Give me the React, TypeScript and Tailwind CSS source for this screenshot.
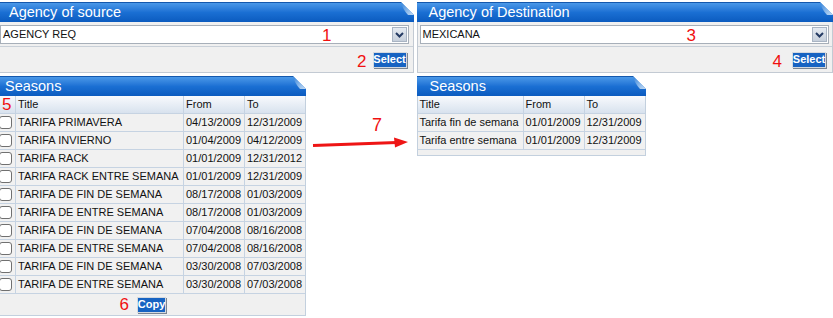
import React from "react";

type Row = { title: string; from: string; to: string };

const SOURCE_ROWS: Row[] = [
  { title: "TARIFA PRIMAVERA", from: "04/13/2009", to: "12/31/2009" },
  { title: "TARIFA INVIERNO", from: "01/04/2009", to: "04/12/2009" },
  { title: "TARIFA RACK", from: "01/01/2009", to: "12/31/2012" },
  { title: "TARIFA RACK ENTRE SEMANA", from: "01/01/2009", to: "12/31/2009" },
  { title: "TARIFA DE FIN DE SEMANA", from: "08/17/2008", to: "01/03/2009" },
  { title: "TARIFA DE ENTRE SEMANA", from: "08/17/2008", to: "01/03/2009" },
  { title: "TARIFA DE FIN DE SEMANA", from: "07/04/2008", to: "08/16/2008" },
  { title: "TARIFA DE ENTRE SEMANA", from: "07/04/2008", to: "08/16/2008" },
  { title: "TARIFA DE FIN DE SEMANA", from: "03/30/2008", to: "07/03/2008" },
  { title: "TARIFA DE ENTRE SEMANA", from: "03/30/2008", to: "07/03/2008" },
];

const DEST_ROWS: Row[] = [
  { title: "Tarifa fin de semana", from: "01/01/2009", to: "12/31/2009" },
  { title: "Tarifa entre semana", from: "01/01/2009", to: "12/31/2009" },
];

// blue title bar with the folded corner on the right
function PanelHeader({ title, pad = "pl-[12px]" }: { title: string; pad?: string }) {
  return (
    <div
      className={`relative h-[20px] flex items-center ${pad} text-white text-[14.5px] border-t border-[#1458ad] bg-linear-to-b from-[#4a98e8] via-[#1a6fd3] to-[#0b5bbf]`}
    >
      {title}
      <svg
        className="absolute top-[-1px] right-0"
        width="13"
        height="13"
        viewBox="0 0 13 13"
      >
        <defs>
          <linearGradient id="fold" x1="0" y1="0" x2="1" y2="1">
            <stop offset="0" stopColor="#2f7fd8" />
            <stop offset="0.6" stopColor="#8fbbea" />
            <stop offset="1" stopColor="#c4dcf5" />
          </linearGradient>
        </defs>
        <polygon points="0,0 13,0 13,13" fill="#ffffff" />
        <path d="M0 0 L13 13 L7 13 Q2 8 0 0 Z" fill="url(#fold)" />
      </svg>
    </div>
  );
}

function Num({ n, className = "" }: { n: string; className?: string }) {
  return (
    <span className={`text-[#f01010] text-[17px] leading-none ${className}`}>
      {n}
    </span>
  );
}

function BlueButton({ label, width }: { label: string; width: string }) {
  return (
    <button
      className={`${width} h-[16px] bg-[#1763c2] text-white font-bold text-[11px] leading-none border border-[#d4d9df] shadow-[1px_1px_0_#7b8592] flex items-center justify-center`}
    >
      {label}
    </button>
  );
}

function AgencyPanel({
  title,
  value,
  selNum,
  selNumLeft,
  btnNum,
  btnGap,
  inset,
}: {
  title: string;
  value: string;
  selNum: string;
  selNumLeft: string;
  btnNum: string;
  btnGap: string;
  inset: string;
}) {
  return (
    <div>
      <PanelHeader title={title} />
      <div className="border border-t-0 border-[#c3cad3] bg-[#f0f0f0]">
        <div className={`${inset} pt-[3px] pb-[2px]`}>
          <div className="relative h-[19px] border border-[#a7afb9] bg-white flex items-center justify-between">
            <span className="pl-[2px] text-[11px] text-[#111]">{value}</span>
            <Num n={selNum} className={`absolute top-[1px] ${selNumLeft}`} />
            <div className="h-[15px] w-[15px] mr-[1px] border border-[#a9b4c3] bg-linear-to-b from-[#e6ebf2] to-[#c6cfdb] flex items-center justify-center">
              <svg width="9" height="6" viewBox="0 0 9 6">
                <path
                  d="M1 1 L4.5 4.5 L8 1"
                  fill="none"
                  stroke="#243a63"
                  strokeWidth="2"
                />
              </svg>
            </div>
          </div>
        </div>
        <div
          className={`border-t border-[#c9d0d8] h-[26px] flex items-center justify-end pr-[6px] ${btnGap}`}
        >
          <Num n={btnNum} className="mt-[3px]" />
          <BlueButton label="Select" width="w-[34px]" />
        </div>
      </div>
    </div>
  );
}

const CELL = "border-r border-b border-[#c6d3e2] flex items-center pl-[2px] whitespace-nowrap";

function SeasonsTable({
  rows,
  cols,
  checks,
}: {
  rows: Row[];
  cols: string;
  checks: boolean;
}) {
  return (
    <div className={`grid ${cols} text-[11px] text-[#111]`}>
      {checks && (
        <div className="relative h-[18px] border-r border-b border-[#c6d3e2] bg-linear-to-b from-[#f8fafd] to-[#d8e2ee]">
          <Num n="5" className="absolute left-[4px] top-[0px] text-[16px]" />
        </div>
      )}
      {["Title", "From", "To"].map((h, i) => (
        <div
          key={h}
          className={`h-[18px] ${CELL} bg-linear-to-b from-[#f8fafd] to-[#d8e2ee] ${
            i === 2 ? "border-r-0" : ""
          }`}
        >
          {h}
        </div>
      ))}
      {rows.map((r, idx) => (
        <React.Fragment key={idx}>
          {checks && (
            <div className="h-[18px] border-r border-b border-[#c6d3e2] bg-[#f1f1f1] flex items-center">
              <div className="ml-[1px] w-[13px] h-[13px] border border-[#707070] rounded-[3px] bg-white" />
            </div>
          )}
          <div className={`h-[18px] ${CELL} bg-[#f1f1f1]`}>{r.title}</div>
          <div className={`h-[18px] ${CELL} bg-[#f1f1f1]`}>{r.from}</div>
          <div className={`h-[18px] ${CELL} bg-[#f1f1f1] border-r-0`}>{r.to}</div>
        </React.Fragment>
      ))}
    </div>
  );
}

export default function App() {
  return (
    <div
      className="relative w-[833px] h-[318px] overflow-hidden bg-white"
      style={{ fontFamily: '"Liberation Sans", Arial, sans-serif' }}
    >
      <div className="flex gap-[3px] -ml-[3px] pt-[2px]">
        {/* source side */}
        <div className="w-[417px] flex flex-col gap-[3px]">
          <AgencyPanel
            title="Agency of source"
            value="AGENCY REQ"
            selNum="1"
            selNumLeft="left-[321px]"
            btnNum="2"
            btnGap="gap-[6px]"
            inset="pl-[2px] pr-[4px]"
          />
          <div className="w-[309px]">
            <PanelHeader title="Seasons" pad="pl-[8px]" />
            <div className="border border-t-0 border-[#c3d0de] bg-[#f0f0f0]">
              <SeasonsTable
                rows={SOURCE_ROWS}
                cols="grid-cols-[18px_168px_61px_60px]"
                checks
              />
              <div className="h-[21px] flex items-center justify-center">
                <div className="relative">
                  <Num n="6" className="absolute right-full mr-[8px] top-[-1px]" />
                  <BlueButton label="Copy" width="w-[29px]" />
                </div>
              </div>
            </div>
          </div>
        </div>

        {/* destination side */}
        <div className="w-[417px] flex flex-col gap-[3px]">
          <AgencyPanel
            title="Agency of Destination"
            value="MEXICANA"
            selNum="3"
            selNumLeft="left-[266px]"
            btnNum="4"
            btnGap="gap-[10px]"
            inset="pl-[2px] pr-[3px]"
          />
          <div className="w-[229px]">
            <PanelHeader title="Seasons" pad="pl-[13px]" />
            <div className="border border-t-0 border-[#c3d0de] bg-[#f0f0f0]">
              <SeasonsTable
                rows={DEST_ROWS}
                cols="grid-cols-[106px_61px_60px]"
                checks={false}
              />
              <div className="h-[5px]" />
            </div>
          </div>
        </div>
      </div>

      {/* annotation arrow 7 */}
      <span className="absolute left-[372px] top-[116px] text-[#f01010] text-[18px] leading-none">
        7
      </span>
      <svg
        className="absolute left-[310px] top-[135px]"
        width="100"
        height="16"
        viewBox="0 0 100 16"
      >
        <path d="M3 10.5 L87 7.5" stroke="#ee1515" strokeWidth="3" fill="none" />
        <polygon points="84,2.5 98,7 85,12.5" fill="#ee1515" />
      </svg>
    </div>
  );
}
